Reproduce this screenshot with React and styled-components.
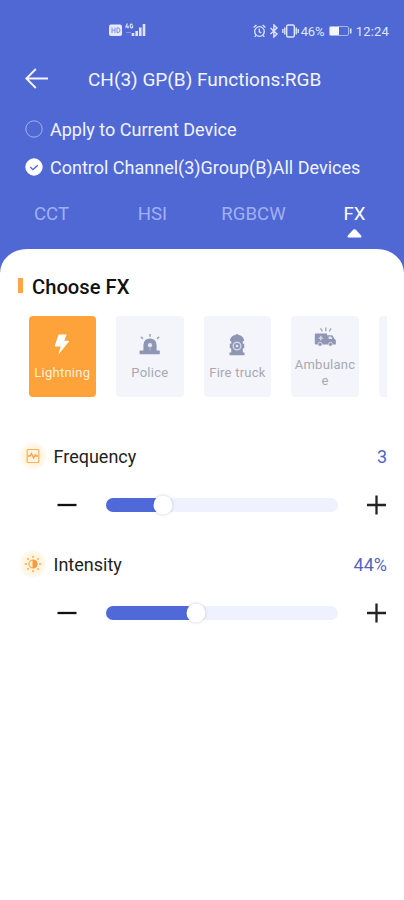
import React, { useState } from 'react';
import styled, { createGlobalStyle } from 'styled-components';

const TABS = ['CCT', 'HSI', 'RGBCW', 'FX'];

const App = () => {
  const [target, setTarget] = useState('group');
  const [tab, setTab] = useState('FX');
  const [effect, setEffect] = useState('Lightning');

  const effects = [
    { name: 'Lightning', icon: <LightningIcon /> },
    { name: 'Police', icon: <PoliceIcon /> },
    { name: 'Fire truck', icon: <HydrantIcon /> },
    { name: 'Ambulance', icon: <AmbulanceIcon /> },
    { name: '', icon: null },
  ];

  return (
    <Screen>
      <GlobalStyle />
      <StatusBar>
        <StatusLeft>
          <SignalIcons />
        </StatusLeft>
        <StatusRight>
          <AlarmIcon />
          <BluetoothIcon />
          <VibrateIcon />
          <Percent>46%</Percent>
          <BatteryIcon />
          <Clock>12:24</Clock>
        </StatusRight>
      </StatusBar>

      <TitleBar>
        <BackButton aria-label="Back">
          <svg width="24" height="22" viewBox="0 0 24 22" fill="none" stroke="#f3f5ff" strokeWidth="1.9">
            <path d="M10.800 1 1.300 10.500l9.500 9.500M1.500 10.500h21.500" />
          </svg>
        </BackButton>
        <Title>CH(3) GP(B) Functions:RGB</Title>
      </TitleBar>

      <Options>
        <Option onClick={() => setTarget('device')}>
          <RadioIcon checked={target === 'device'} />
          <OptionText>Apply to Current Device</OptionText>
        </Option>
        <Option onClick={() => setTarget('group')}>
          <RadioIcon checked={target === 'group'} />
          <OptionText>Control Channel(3)Group(B)All Devices</OptionText>
        </Option>
      </Options>

      <TabBar>
        {TABS.map((name) => (
          <Tab key={name} $active={tab === name} onClick={() => setTab(name)}>
            {name}
            {tab === name && (
              <svg width="15" height="9" viewBox="0 0 15 9" fill="#fff">
                <path d="M6.400.600q1.100-.900 2.200 0l5.500 5.800q1.100 2.200-1 2.200H1.900q-2.100 0-1-2.200z" />
              </svg>
            )}
          </Tab>
        ))}
      </TabBar>

      <Sheet>
        <SectionTitle>Choose FX</SectionTitle>
        <EffectList>
          {effects.map(({ name, icon }) => (
            <EffectCard key={name} $active={effect === name} onClick={() => setEffect(name)}>
              {icon}
              <EffectName>{name}</EffectName>
            </EffectCard>
          ))}
        </EffectList>

        <Control label="Frequency" value="3" percent={24.7} icon={<FrequencyIcon />} />
        <Control label="Intensity" value="44%" percent={38.8} icon={<IntensityIcon />} />
      </Sheet>
    </Screen>
  );
};

const Control = ({ label, value, percent, icon }) => (
  <ControlBox>
    <ControlHead>
      <IconHalo>{icon}</IconHalo>
      <ControlLabel>{label}</ControlLabel>
      <ControlValue>{value}</ControlValue>
    </ControlHead>
    <SliderRow>
      <StepButton aria-label="minus">
        <svg width="20" height="20" viewBox="0 0 20 20" stroke="#111" strokeWidth="2.3">
          <path d="M.5 10h19" />
        </svg>
      </StepButton>
      <Track>
        <Fill style={{ width: `${percent}%` }} />
        <Thumb style={{ left: `${percent}%` }} />
      </Track>
      <StepButton aria-label="plus">
        <svg width="20" height="20" viewBox="0 0 20 20" stroke="#222" strokeWidth="2.3">
          <path d="M0 10h19M9.500.500v19" />
        </svg>
      </StepButton>
    </SliderRow>
  </ControlBox>
);

const RadioIcon = ({ checked }) => (
  <svg width="18" height="18" viewBox="0 0 18 18" fill="none">
    <circle cx="9" cy="9" r="8.2" fill={checked ? '#fff' : 'none'} stroke={checked ? '#fff' : '#a3b1ec'} />
    {checked && <path d="m5.200 9 2.700 2.600 5-4.400" stroke="#5068d4" strokeWidth="1.3" />}
  </svg>
);

const SignalIcons = () => (
  <svg width="38" height="16" viewBox="0 0 38 16">
    <rect x="0" y="2.5" width="13" height="11.5" rx="2" fill="#e4e9fb" />
    <path d="M3 5.500v5.500M6 5.500v5.500M3 8.200h3M8 5.900h1q2 0 2 2.300t-2 2.300H8z" stroke="#7f90df" fill="none" />
    <path d="M18.400 1.500 16.800 5h3M19 3.500v3M23.600 2.400q-2.400-1-2.400 1.600t2.400 1.600V4h-1" stroke="#dce3fa" fill="none" strokeWidth="1.100" />
    <path d="M17 10.500h5" stroke="#8294e2" strokeWidth="1" />
    <path d="M24 14v-3M27.700 14V9M31.300 14V5.500M35 14V2" stroke="#dfe5fb" strokeWidth="2.600" />
  </svg>
);

const AlarmIcon = () => (
  <svg width="13" height="14" viewBox="0 0 13 14" fill="none" stroke="#dfe5fb" strokeWidth="1.3">
    <circle cx="6.5" cy="7.5" r="4.800" />
    <path d="M6.300 4.800v3l2 1M.600 3.500 3.400 1M12.400 3.500 9.600 1M3 11.400l-1.300 1.500M10 11.400l1.300 1.500" />
  </svg>
);

const BluetoothIcon = () => (
  <svg width="10" height="14" viewBox="0 0 9 14" fill="none" stroke="#dfe5fb" strokeWidth="1.4">
    <path d="m1 4 6.500 6L4.400 13V1l3.100 3L1 10" />
  </svg>
);

const VibrateIcon = () => (
  <svg width="17" height="14" viewBox="0 0 17 14" fill="none" stroke="#dfe5fb" strokeWidth="1.4">
    <rect x="4.700" y="1" width="7.600" height="12" rx="1.500" />
    <path d="M2.800 3.500v7M14.200 3.500v7M.800 5v4M16.200 5v4" />
  </svg>
);

const BatteryIcon = () => (
  <svg width="23" height="12" viewBox="0 0 23 12">
    <rect x=".5" y="1.5" width="19" height="9" rx="1.5" fill="none" stroke="#a9b6ec" />
    <path d="M1 2h9v8H1z" fill="#f4f6ff" />
    <path d="M21.700 3.500v5" stroke="#dfe5fb" strokeWidth="1.6" />
  </svg>
);

const LightningIcon = () => (
  <svg width="24" height="24" viewBox="0 0 24 24" fill="#fff">
    <path d="M9.200 1.500h6.800q.700 0 .400.800l-2.100 5.500h4.400q.800.100.300.800L8.400 21.500l2.200-8H5.500q-.900 0-.600-.900L8.300 2.200q.200-.700.900-.700z" />
  </svg>
);

const PoliceIcon = () => (
  <svg width="24" height="24" viewBox="0 0 24 24">
    <path d="M5.400 17.500v-5.200Q5.600 5.800 12 5.600q6.400.2 6.600 6.700v5.200h3.200v3.800H1.600v-3.800z" fill="#8e96b3" />
    <path d="M12 1v2.800M2.800 4l2.300 1.700M21.200 4l-2.300 1.700" stroke="#a4abc2" strokeWidth="1.700" />
    <circle cx="12" cy="12.200" r="2.100" fill="#e6e9f3" />
    <path d="M12 14v3.500" stroke="#b5bbcf" />
  </svg>
);

const HydrantIcon = () => (
  <svg width="24" height="24" viewBox="0 0 24 24">
    <path
      d="M5 6.500Q6.300 2.600 10.300 2L12 .800 13.700 2q4 .600 5.300 4.500v1.400h-1.200v2.900h1.400v4.500h-1.400v4.200h1.700v2.700h-15v-2.700h1.700v-4.200H4.800v-4.500h1.400V7.900H5z"
      fill="#8e96b3"
    />
    <circle cx="12" cy="13" r="3.800" fill="none" stroke="#d2d7e7" strokeWidth="1.400" />
    <circle cx="12" cy="13" r="1.300" fill="#e7eaf4" />
  </svg>
);

const AmbulanceIcon = () => (
  <svg width="24" height="24" viewBox="0 0 24 24">
    <path d="M2.700 8.500h11.300v11H2.700q-.9 0-.9-1v-9q0-1 .9-1zM14 10.200h4.500q1 0 1.500 1l1.500 2.900q1.300.300 1.300 1.400v4H14z" fill="#8e96b3" />
    <path d="M15.600 11.500h2.600l1.200 2.600h-3.800z" fill="#e6e9f3" />
    <path d="M7.800 10.800v4.600M5.500 13.100h4.600" stroke="#d8dcea" strokeWidth="1.300" />
    <path d="M12.800 2.500v3.700M7.500 3.300l1.900 3.200M18.100 3.300l-1.900 3.200" stroke="#a4abc2" strokeWidth="1.400" />
    <circle cx="7" cy="19.300" r="2" fill="#8e96b3" stroke="#e6e9f3" strokeWidth=".8" />
    <circle cx="17.500" cy="19.300" r="2" fill="#8e96b3" stroke="#e6e9f3" strokeWidth=".8" />
  </svg>
);

const FrequencyIcon = () => (
  <svg width="16" height="16" viewBox="0 0 16 16" fill="none" stroke="#f9b163">
    <rect x="2.200" y="1.500" width="11.600" height="13" rx=".8" strokeWidth="1.200" />
    <path d="M3 8h2l1.500-2.400L8.700 10l1.600-3.200L11 8h2" stroke="#f7a04a" strokeWidth="1.300" />
  </svg>
);

const IntensityIcon = () => (
  <svg width="18" height="18" viewBox="0 0 18 18" fill="none" stroke="#f8ad5b">
    <circle cx="9" cy="9" r="4" strokeWidth="1.200" />
    <path d="M9 5a4 4 0 0 1 0 8z" fill="#f79b3c" stroke="#f79b3c" />
    <path
      d="M9 .8v2.200M9 15v2.200M.8 9H3M15 9h2.200M3.200 3.200l1.500 1.500M13.300 13.300l1.500 1.500M14.800 3.200l-1.500 1.500M4.700 13.300l-1.500 1.500"
      strokeWidth="1.400"
    />
  </svg>
);

const GlobalStyle = createGlobalStyle`
  * {
    box-sizing: border-box;
  }

  body {
    margin: 0;
    font-family: Roboto, "Liberation Sans", sans-serif;
    background: #fff;
  }

  button {
    padding: 0;
    border: 0;
    background: none;
    font: inherit;
    color: inherit;
  }

  svg {
    display: block;
    flex-shrink: 0;
  }
`;

const Screen = styled.div`
  width: 404px;
  height: 900px;
  display: flex;
  flex-direction: column;
  overflow: hidden;
  background: #5068d4;
`;

const StatusBar = styled.div`
  height: 60px;
  padding: 0 15px 0 109px;
  display: flex;
  justify-content: space-between;
  color: #dfe5fb;
`;

const StatusLeft = styled.div`
  padding-top: 22px;
`;

const StatusRight = styled.div`
  height: 62px;
  display: flex;
  align-items: center;
  gap: 3px;
`;

const Percent = styled.span`
  width: 25px;
  margin-left: -1px;
  font-size: 13px;
  letter-spacing: -0.1px;
  white-space: nowrap;
`;

const Clock = styled.span`
  margin-left: 1px;
  font-size: 13px;
  letter-spacing: 0.2px;
`;

const TitleBar = styled.div`
  height: 38px;
  padding-left: 25px;
  display: flex;
  align-items: center;
`;

const BackButton = styled.button`
  width: 63px;
`;

const Title = styled.div`
  font-size: 19px;
  color: #f3f5ff;
  white-space: nowrap;
`;

const Options = styled.div`
  padding: 12px 0 0 25px;
`;

const Option = styled.div`
  height: 38px;
  display: flex;
  align-items: center;
  gap: 7px;
`;

const OptionText = styled.span`
  font-size: 18px;
  color: #f0f3ff;
  white-space: nowrap;
`;

const TabBar = styled.div`
  height: 63px;
  padding: 15px 0 0 1px;
  display: grid;
  grid-template-columns: repeat(4, 101px);
`;

const Tab = styled.button`
  display: flex;
  flex-direction: column;
  align-items: center;
  gap: 2px;
  font-size: 18.6px;
  line-height: 26px;
  color: ${({ $active }) => ($active ? '#fff' : '#a0b1f2')};
`;

const Sheet = styled.div`
  flex: 1;
  padding: 26px 17px 0 18px;
  border-radius: 27px 27px 0 0 / 24px 24px 0 0;
  background: #fff;
`;

const SectionTitle = styled.div`
  height: 24px;
  display: flex;
  align-items: center;
  gap: 9px;
  font-size: 20.200px;
  font-weight: 500;
  color: #111;

  &::before {
    content: '';
    width: 5px;
    height: 15px;
    margin-top: -3px;
    background: #fda643;
  }
`;

const EffectList = styled.div`
  margin-top: 17px;
  padding-left: 10.6px;
  display: flex;
  gap: 20.2px;
  overflow: hidden;
`;

const EffectCard = styled.button`
  width: 67.4px;
  height: 81px;
  flex-shrink: 0;
  display: flex;
  flex-direction: column;
  align-items: center;
  justify-content: center;
  gap: 8px;
  border-radius: 4px;
  background: ${({ $active }) => ($active ? '#fea23a' : '#f4f5fa')};
  color: ${({ $active }) => ($active ? '#fff0dc' : '#a5a9b5')};
`;

const EffectName = styled.span`
  width: 64px;
  font-size: 13px;
  line-height: 16px;
  letter-spacing: 0.25px;
  overflow-wrap: anywhere;
`;

const ControlBox = styled.div`
  height: 108px;

  ${EffectList} + & {
    margin-top: 44px;
  }
`;

const ControlHead = styled.div`
  height: 30px;
  padding-left: 1px;
  display: flex;
  align-items: center;
`;

const IconHalo = styled.div`
  width: 28px;
  height: 28px;
  display: flex;
  align-items: center;
  justify-content: center;
  border-radius: 50%;
  background: radial-gradient(#fff4dc 40%, #fffaf0 65%, #fff 72%);
`;

const ControlLabel = styled.span`
  flex: 1;
  margin-left: 6.5px;
  font-size: 18px;
  color: #222;
`;

const ControlValue = styled.span`
  font-size: 18px;
  color: #5365bd;
`;

const SliderRow = styled.div`
  height: 68px;
  padding-left: 39px;
  display: flex;
  align-items: center;
`;

const StepButton = styled.button`
  width: 20px;
  height: 20px;
`;

const Track = styled.div`
  position: relative;
  flex: 1;
  height: 14px;
  margin: 0 29px;
  border-radius: 7px;
  background: #eff1fe;
`;

const Fill = styled.div`
  height: 100%;
  border-radius: 7px 0 0 7px;
  background: #5069d9;
`;

const Thumb = styled.div`
  position: absolute;
  top: 50%;
  width: 19px;
  height: 19px;
  border-radius: 50%;
  background: #fff;
  box-shadow: 0 0 3px rgba(60, 70, 120, 0.3);
  transform: translate(-50%, -50%);
`;

export default App;
